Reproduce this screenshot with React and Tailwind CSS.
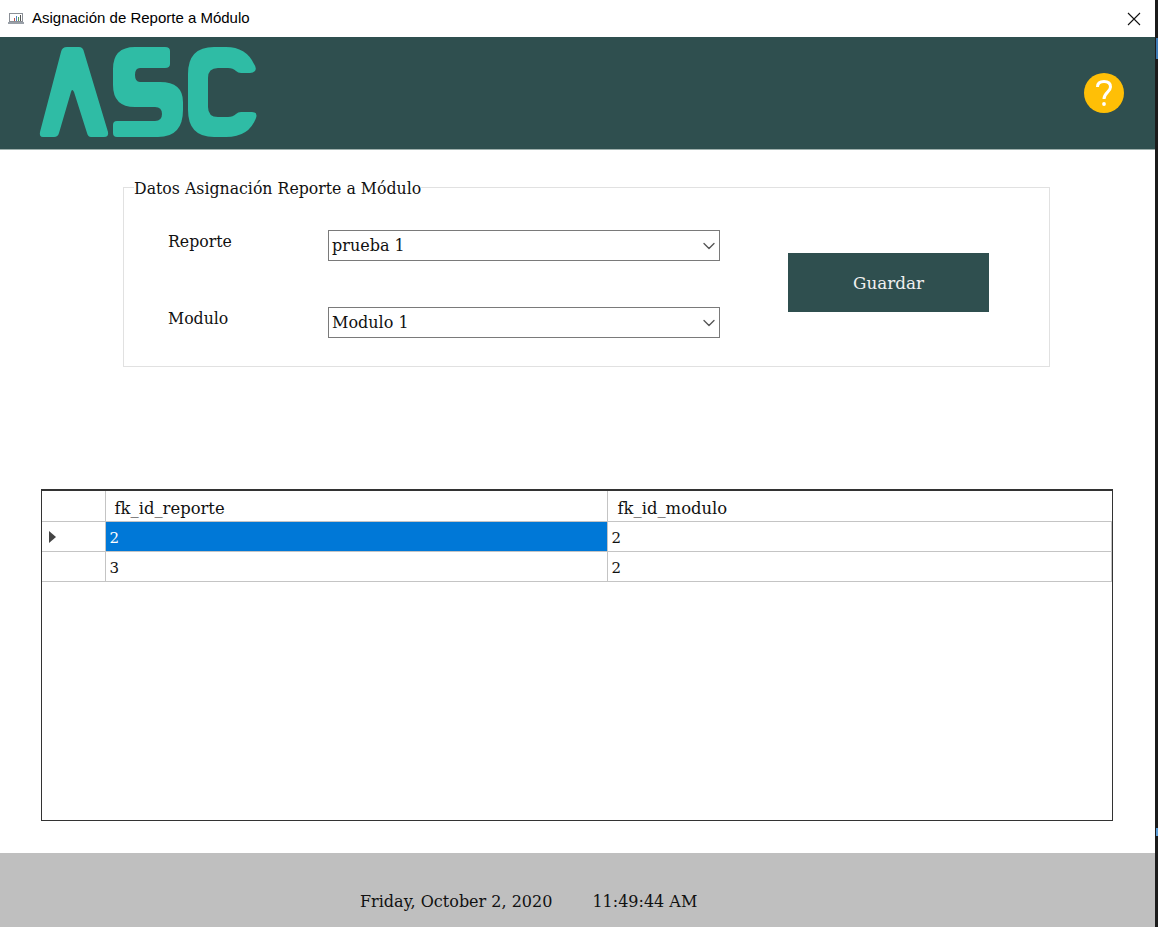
import { ChevronDown } from 'lucide-react';

const slab = 'font-["DejaVu_Serif",serif]';

function Logo() {
  return (
    <svg width="230" height="112" viewBox="30 37 230 112" className="block" fill="#2fbca5">
      <path d="M40 132 L61 52 Q62 47 67 47 H79 Q83 47 84 52 L108 132 Q109 137 104 137 H91 Q88 137 87 133 L74 92 Q72 88 71 92 L59 133 Q58 137 54 137 H43 Q39 137 40 132 Z" />
      <path d="M165 47 Q170 47 170 51 V64 Q170 68 165 68 H140 Q135 68 135 75 Q135 82 140 82 H160 Q183 82 183 102 V110 Q183 137 158 137 H117 Q113 137 113 133 V125 Q113 121 117 121 H155 Q162 121 162 114 Q162 107 155 107 H135 Q113 107 113 85 V69 Q113 47 135 47 Z" />
      <path d="M254 64 Q257 68 255 71 Q253 73 250 73 H241 Q238 73 236 71 Q233 68 228 68 H218 Q208 68 208 78 V107 Q208 117 218 117 H228 Q233 117 236 114 Q238 112 241 112 H252 Q258 112 256 118 Q249 137 226 137 H214 Q188 137 188 110 V74 Q188 47 214 47 H226 Q246 47 254 64 Z" />
    </svg>
  );
}

function HelpIcon() {
  return (
    <svg width="40" height="40" viewBox="0 0 40 40" className="block">
      <circle cx="20" cy="20" r="20" fill="#ffbf06" />
      <path d="M13.500 14 Q13.500 8.500 20 8.500 Q26.500 8.500 26.500 14 C26.500 19 20 19.500 20 26" fill="none" stroke="#fff" strokeWidth="3" />
      <circle cx="20" cy="31" r="1.900" fill="#fff" />
    </svg>
  );
}

function WindowIcon() {
  return (
    <svg width="16" height="13" viewBox="0 0 16 13" className="block">
      <rect x="1.500" y="1.500" width="13" height="8" fill="#fff" stroke="#8a8f96" />
      <rect x="0" y="10" width="16" height="2" fill="#9aa0a8" />
      <rect x="6" y="6" width="1" height="3" fill="#c0504d" />
      <rect x="8" y="4" width="1" height="5" fill="#4f81bd" />
      <rect x="10" y="5" width="1" height="4" fill="#5b9a5b" />
      <rect x="12" y="3" width="1" height="6" fill="#555" />
    </svg>
  );
}

function FakeSelect({ value }) {
  return (
    <div className="w-[392px] h-[31px] border border-[#7a7a7a] bg-white flex items-center justify-between pl-[3px] text-[16px] text-[#111]">
      <span>{value}</span>
      <ChevronDown size={20} strokeWidth={1.6} className="text-[#555]" />
    </div>
  );
}

const rows = [
  { reporte: '2', modulo: '2', active: true },
  { reporte: '3', modulo: '2' },
];

export default function App() {
  return (
    <div className={`w-[1158px] h-[927px] flex bg-white overflow-hidden ${slab}`}>
      <div className="w-[1155px] flex flex-col">
        <div className="h-[37px] flex items-center justify-between pl-2 pr-[14px] font-['Liberation_Sans',sans-serif]">
          <div className="flex items-center gap-2">
            <WindowIcon />
            <span className="text-[15px] text-black">Asignación de Reporte a Módulo</span>
          </div>
          <svg width="14" height="14" viewBox="0 0 14 14" stroke="#111" strokeWidth="1.100"><path d="M1 1 L13 13 M13 1 L1 13" /></svg>
        </div>

        <div className="h-[113px] bg-[#2f4f4f] border-b border-[#9fb0ad] flex items-center justify-between pl-[30px] pr-[31px]">
          <Logo />
          <HelpIcon />
        </div>

        <fieldset className="mt-[28px] ml-[123px] w-[927px] h-[189px] border border-[#e1e1e1] pl-[10px] pr-[60px]">
          <legend className="text-[15.750px] leading-[17px] pt-[2px] text-[#111]">Datos Asignación Reporte a Módulo</legend>
          <div className="flex items-center justify-between h-[148px] mt-[13px]">
            <div className="flex flex-col gap-[46px] pl-[34px]">
              <div className="flex items-center">
                <span className="w-[160px] text-[15.750px] text-[#111] -mt-[8px]">Reporte</span>
                <FakeSelect value="prueba 1" />
              </div>
              <div className="flex items-center">
                <span className="w-[160px] text-[15.750px] text-[#111] -mt-[8px]">Modulo</span>
                <FakeSelect value="Modulo 1" />
              </div>
            </div>
            <button className="w-[201px] h-[59px] -mt-[4px] pt-[3px] bg-[#2f4f4f] text-[#f0f0f0] text-[16.800px]">Guardar</button>
          </div>
        </fieldset>

        <div className="mt-[122px] ml-[41px] w-[1072px] h-[332px] border border-[#333] border-t-2">
          <table className="w-full table-fixed border-collapse text-[16.400px] leading-[20px] text-[#111]">
            <colgroup>
              <col className="w-[63px]" />
              <col className="w-[502px]" />
              <col />
            </colgroup>
            <thead>
              <tr className="h-[30px]">
                <th className="border-r border-b border-[#c4c4c4]"></th>
                <th className="border-r border-b border-[#c4c4c4] text-left font-normal pl-[9px] pt-[6px]">fk_id_reporte</th>
                <th className="border-b border-[#c4c4c4] text-left font-normal pl-[10px] pt-[6px]">fk_id_modulo</th>
              </tr>
            </thead>
            <tbody>
              {rows.map((r, i) => (
                <tr key={i} className="h-[30px] text-[15px]">
                  <td className="border-r border-b border-[#c4c4c4] pl-[7px] pt-[2px]">
                    {r.active && <div className="w-0 h-0 border-y-[6px] border-y-transparent border-l-[7px] border-l-[#444]"></div>}
                  </td>
                  <td className={`border-r border-b border-[#c4c4c4] pl-[4px] pt-[4px] ${r.active ? 'bg-[#0078d7] text-white' : ''}`}>{r.reporte}</td>
                  <td className="border-r border-b border-[#c4c4c4] pl-[4px] pt-[4px]">{r.modulo}</td>
                </tr>
              ))}
            </tbody>
          </table>
        </div>

        <div className="mt-[32px] h-[74px] bg-[#bfbfbf] flex items-end gap-[40px] pl-[360px] pb-[13px] text-[16px] text-[#111]">
          <span>Friday, October 2, 2020</span>
          <span>11:49:44 AM</span>
        </div>
      </div>
      <div className="w-[3px] bg-[#1b1b1b] flex flex-col items-end">
        <div className="mt-[38px] w-[2px] h-[21px] bg-[#3d7ab5]"></div>
        <div className="mt-[769px] w-[2px] h-[8px] bg-[#5b9bd5]"></div>
      </div>
    </div>
  );
}
